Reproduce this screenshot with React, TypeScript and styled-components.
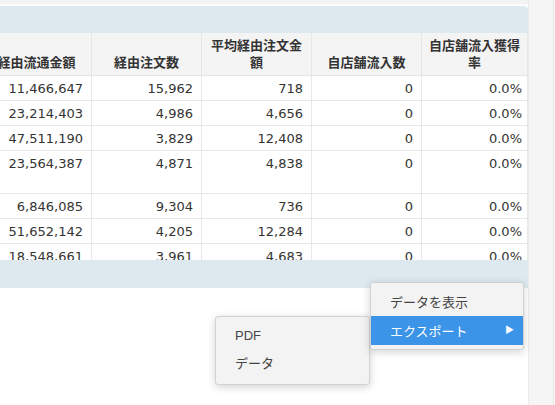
import React from "react";
import styled, { createGlobalStyle } from "styled-components";

const GlobalStyle = createGlobalStyle`
  html, body {
    margin: 0;
    padding: 0;
    background: #ffffff;
  }
  body {
    font-family: "DejaVu Sans", "Noto Sans CJK JP", sans-serif;
    color: #333;
  }
`;

const Page = styled.div`
  display: flex;
  width: 555px;
  height: 405px;
  overflow: hidden;
  position: relative;
`;

const Main = styled.div`
  flex: 1;
  display: flex;
  flex-direction: column;
  gap: 3px;
  min-width: 0;
`;

const PrevCardEdge = styled.div`
  height: 3px;
  background: #f3f3f3;
  box-shadow: 0 1px 2px rgba(0, 0, 0, 0.08);
`;

const Card = styled.div`
  display: flex;
  flex-direction: column;
  border-radius: 0 4px 0 0;
  overflow: hidden;
`;

const CardBar = styled.div<{ $h: number }>`
  height: ${(p) => p.$h}px;
  flex-shrink: 0;
  background: #dde9ef;
`;

const TableViewport = styled.div`
  height: 227px;
  overflow: hidden;
  display: flex;
  justify-content: flex-end;
  align-items: flex-start;
`;

const Table = styled.table`
  border-collapse: collapse;
  table-layout: fixed;
  flex-shrink: 0;
  width: 766px;
`;

const HeadCell = styled.th`
  height: 42px;
  padding: 0 4px 5px;
  box-sizing: border-box;
  background: #f4f4f4;
  border: 1px solid #e6e6e6;
  border-top: none;
  vertical-align: bottom;
  text-align: center;
  font-family: "Noto Sans CJK JP", sans-serif;
  font-size: 13px;
  font-weight: bold;
  line-height: 17px;
  color: #333;
`;

const Row = styled.tr<{ $tall?: boolean }>`
  height: ${(p) => (p.$tall ? 43 : 25)}px;
`;

const Cell = styled.td<{ $last?: boolean }>`
  padding: 4px ${(p) => (p.$last ? 5 : 8)}px 0 8px;
  border: 1px solid #e8e8e8;
  border-top: none;
  vertical-align: top;
  text-align: right;
  font-size: 13px;
  line-height: 17px;
  color: #333;
  white-space: nowrap;
`;

const Side = styled.div`
  width: 25px;
  flex-shrink: 0;
  background: #f5f5f5;
  border-right: 1px solid #e6e6e6;
  box-shadow: inset 1px 0 0 #ececec;
`;

const SideEdge = styled.div`
  width: 1px;
  flex-shrink: 0;
  background: #fafafa;
`;

const Menu = styled.div<{ $left: number; $top: number; $w: number }>`
  position: absolute;
  left: ${(p) => p.$left}px;
  top: ${(p) => p.$top}px;
  width: ${(p) => p.$w}px;
  box-sizing: border-box;
  background: #f3f3f3;
  border: 1px solid #d2d2d2;
  border-radius: 3px;
  box-shadow: 0 2px 8px rgba(0, 0, 0, 0.18);
  font-family: "Liberation Sans", "Noto Sans CJK JP", sans-serif;
  font-size: 13px;
  color: #444;
`;

const MainMenu = styled(Menu)`
  padding: 4px 0 4px;
  z-index: 2;
`;

const SubMenu = styled(Menu)`
  padding: 5px 0 8px;
  z-index: 1;
`;

const MenuItem = styled.div<{ $active?: boolean; $h: number }>`
  display: flex;
  align-items: center;
  justify-content: space-between;
  height: ${(p) => p.$h}px;
  padding: 0 9px 0 19px;
  background: ${(p) => (p.$active ? "#3b94e7" : "transparent")};
  color: ${(p) => (p.$active ? "#ffffff" : "#444")};
`;

const Arrow = styled.span`
  font-size: 9px;
  line-height: 1;
`;

const columns = [
  "店舗名",
  "流通金額",
  "経由流通金額",
  "経由注文数",
  "平均経由注文金額",
  "自店舗流入数",
  "自店舗流入獲得率",
];

const widths = [110, 110, 110, 110, 110, 110, 106];

const rows = [
  ["A店", "12,840,110", "11,466,647", "15,962", "718", "0", "0.0%"],
  ["B店", "25,002,377", "23,214,403", "4,986", "4,656", "0", "0.0%"],
  ["C店", "49,120,004", "47,511,190", "3,829", "12,408", "0", "0.0%"],
  ["D店", "24,981,002", "23,564,387", "4,871", "4,838", "0", "0.0%", "tall"],
  ["E店", "7,113,540", "6,846,085", "9,304", "736", "0", "0.0%"],
  ["F店", "53,001,920", "51,652,142", "4,205", "12,284", "0", "0.0%"],
  ["G店", "19,210,088", "18,548,661", "3,961", "4,683", "0", "0.0%"],
];

export default function App() {
  return (
    <>
      <GlobalStyle />
      <Page>
        <Main>
          <PrevCardEdge />
          <Card>
            <CardBar $h={27} />
            <TableViewport>
              <Table>
                <colgroup>
                  {widths.map((w, i) => (
                    <col key={i} style={{ width: w }} />
                  ))}
                </colgroup>
                <thead>
                  <tr>
                    {columns.map((c) => (
                      <HeadCell key={c}>{c}</HeadCell>
                    ))}
                  </tr>
                </thead>
                <tbody>
                  {rows.map((r, idx) => (
                    <Row key={idx} $tall={r[7] === "tall"}>
                      {r.slice(0, 7).map((v, i) => (
                        <Cell key={i} $last={i === 6}>
                          {v}
                        </Cell>
                      ))}
                    </Row>
                  ))}
                </tbody>
              </Table>
            </TableViewport>
            <CardBar $h={28} />
          </Card>
        </Main>
        <Side />
        <SideEdge />

        <SubMenu $left={215} $top={316} $w={155}>
          <MenuItem $h={27}>PDF</MenuItem>
          <MenuItem $h={27}>データ</MenuItem>
        </SubMenu>

        <MainMenu $left={370} $top={282} $w={154}>
          <MenuItem $h={29}>データを表示</MenuItem>
          <MenuItem $h={29} $active>
            エクスポート
            <Arrow>▶</Arrow>
          </MenuItem>
        </MainMenu>
      </Page>
    </>
  );
}
